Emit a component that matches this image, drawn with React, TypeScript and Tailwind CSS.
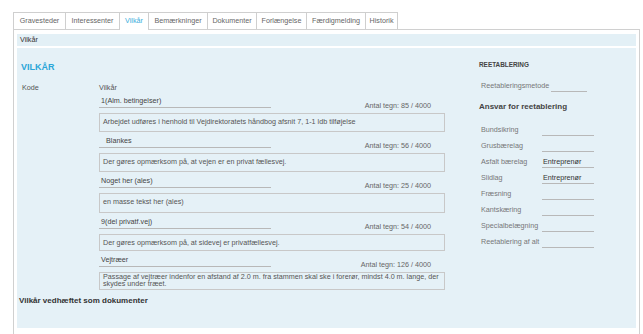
const TABS = [
  { label: "Gravesteder", w: "w-[52px]" },
  { label: "Interessenter", w: "w-[54px]" },
  { label: "Vilkår", w: "w-[29px]", active: true },
  { label: "Bemærkninger", w: "w-[59px]" },
  { label: "Dokumenter", w: "w-[49px]" },
  { label: "Forlængelse", w: "w-[50px]" },
  { label: "Færdigmelding", w: "w-[59px]" },
  { label: "Historik", w: "w-[33px]" },
];

const VILKAAR = [
  {
    title: "1(Alm. betingelser)",
    indent: "pl-[2px]",
    count: "85",
    box: "h-[19px]",
    text: "Arbejdet udføres i henhold til Vejdirektoratets håndbog afsnit 7, 1-1 ldb tilføjelse",
  },
  {
    title: "Blankes",
    indent: "pl-[7px]",
    count: "56",
    box: "h-[19px]",
    text: "Der gøres opmærksom på, at vejen er en privat fællesvej.",
  },
  {
    title: "Noget her (ales)",
    indent: "pl-[2px]",
    count: "25",
    box: "h-[20px]",
    text: "en masse tekst her (ales)",
  },
  {
    title: "9(del privatf.vej)",
    indent: "pl-[2px]",
    count: "54",
    box: "h-[17px]",
    text: "Der gøres opmærksom på, at sidevej er privatfællesvej.",
  },
  {
    title: "Vejtræer",
    indent: "pl-[2px]",
    count: "126",
    box: "h-[18px]",
    text: "Passage af vejtræer indenfor en afstand af 2.0 m. fra stammen skal ske i forerør, mindst 4.0 m. lange, der skydes under træet.",
  },
];

const ANSVAR = [
  { label: "Bundsikring", value: "" },
  { label: "Grusbærelag", value: "" },
  { label: "Asfalt bærelag", value: "Entreprenør" },
  { label: "Slidlag", value: "Entreprenør" },
  { label: "Fræsning", value: "" },
  { label: "Kantskæring", value: "" },
  { label: "Specialbelægning", value: "" },
  { label: "Reetablering af alt", value: "" },
];

function VilkaarEntry({ item }: { item: (typeof VILKAAR)[number] }) {
  const multi = item.text.length > 100;
  return (
    <div className="flex flex-col">
      <div className="flex items-end justify-between">
        <div className={`w-[172px] h-[12px] border-b border-[#b8b8b8] leading-[10px] text-[#444] ${item.indent}`}>
          {item.title}
        </div>
        <div className="pr-[14px] mb-[-2px] leading-[8px] text-[#666]">
          Antal tegn: {item.count} / 4000
        </div>
      </div>
      <div
        className={`mt-[5px] border border-[#c8c8c8] px-[3px] text-[#555] ${item.box} ${
          multi ? "pt-[1px] leading-[6.5px]" : "pt-[3px] leading-[9px]"
        }`}
      >
        {item.text}
      </div>
    </div>
  );
}

export default function App() {
  return (
    <div
      className="w-[643px] h-[334px] overflow-hidden bg-white pt-[12px] pl-[13px] text-[7.2px]"
      style={{ fontFamily: '"Liberation Sans", Arial, sans-serif' }}
    >
      {/* Tabs */}
      <div className="flex items-end">
        {TABS.map((t, i) => (
          <div
            key={t.label}
            className={`flex items-center justify-center border-t border-l border-[#cfcfcf] ${t.w} ${
              i === TABS.length - 1 ? "border-r" : ""
            } ${
              t.active
                ? "relative z-10 h-[18px] mb-[-1px] bg-white text-[#3aaedc]"
                : "h-[17px] bg-white text-[#666]"
            }`}
          >
            {t.label}
          </div>
        ))}
      </div>

      {/* Panel */}
      <div className="w-[627px] h-[310px] border-t border-l border-r border-[#d0d0d0] pt-[4px] px-[3px]">
        <div className="h-[12px] bg-[#e3f0f6] pl-[3px] leading-[12px] text-[#333]">Vilkår</div>

        <div className="mt-[2px] h-[280px] bg-[#e5f1f7] flex">
          {/* Left: vilkår */}
          <div className="w-[440px] flex flex-col">
            <div className="mt-[14px] ml-[4px] text-[9px] leading-[10px] font-bold text-[#2ba6d8]">VILKÅR</div>

            <div className="mt-[11px] flex">
              <div className="w-[82px] pl-[5px] leading-[9px] text-[#555]">Kode</div>
              <div className="w-[346px] flex flex-col">
                <div className="leading-[9px] text-[#555]">Vilkår</div>
                <div className="mt-[4px] flex flex-col gap-[4px]">
                  {VILKAAR.map((v) => (
                    <VilkaarEntry key={v.title} item={v} />
                  ))}
                </div>
              </div>
            </div>

            <div className="mt-[6px] ml-[2px] text-[8px] leading-[10px] font-bold text-[#333]">
              Vilkår vedhæftet som dokumenter
            </div>
          </div>

          {/* Right: reetablering */}
          <div className="ml-[22px] flex flex-col pt-[13px]">
            <div className="text-[6.4px] leading-[8px] font-bold text-[#444]">REETABLERING</div>

            <div className="mt-[10px] flex h-[16px] pl-[2px]">
              <div className="w-[70px] mt-[2px] leading-[9px] text-[#777]">Reetableringsmetode</div>
              <div className="w-[36px] h-[13px] border-b border-[#b8b8b8]" />
            </div>

            <div className="mt-[7px] text-[8px] leading-[10px] font-bold text-[#444]">Ansvar for reetablering</div>

            <div className="mt-[11px] flex flex-col pl-[2px]">
              {ANSVAR.map((r) => (
                <div key={r.label} className="flex h-[16px]">
                  <div className="w-[61px] mt-[2px] leading-[9px] text-[#777] whitespace-nowrap">{r.label}</div>
                  <div className="w-[52px] h-[13px] border-b border-[#b8b8b8] pl-[1px] pt-[2px] leading-[9px] text-[#333]">
                    {r.value}
                  </div>
                </div>
              ))}
            </div>
          </div>
        </div>
      </div>
    </div>
  );
}
